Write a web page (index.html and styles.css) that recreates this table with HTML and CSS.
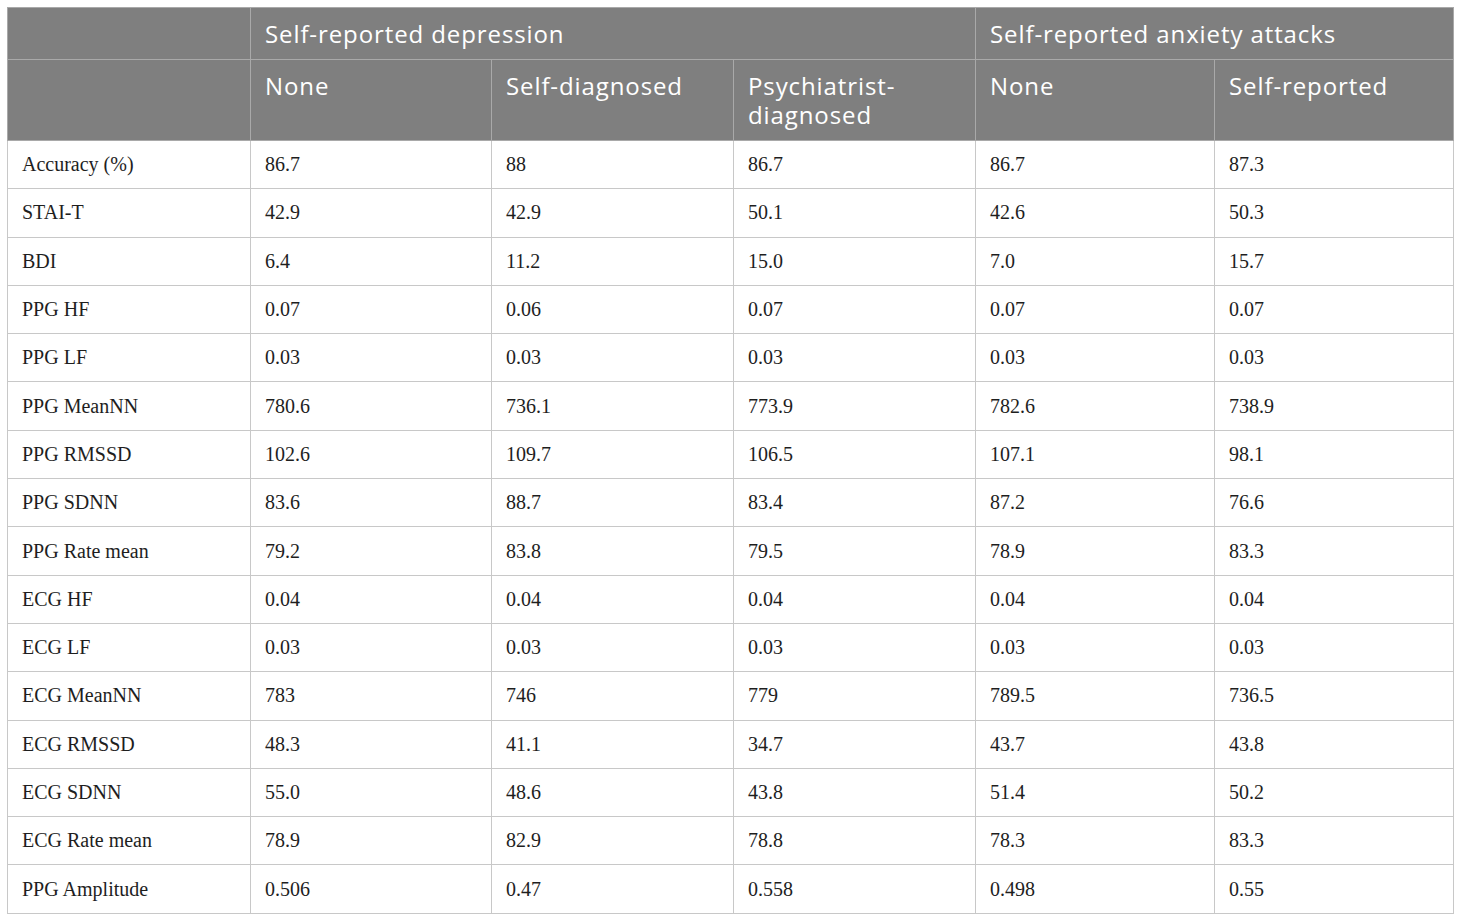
FILE: index.html
```html
<!DOCTYPE html>
<html>
<head>
<meta charset="utf-8">
<link rel="stylesheet" href="styles.css">
</head>
<body>
<div class="wrap">
<table class="data">
<colgroup>
<col class="c1"><col class="c2"><col class="c3"><col class="c4"><col class="c5"><col class="c6">
</colgroup>
<thead>
<tr>
<th></th>
<th colspan="3">Self-reported depression</th>
<th colspan="2">Self-reported anxiety attacks</th>
</tr>
<tr>
<th></th>
<th>None</th>
<th>Self-diagnosed</th>
<th>Psychiatrist-<br>diagnosed</th>
<th>None</th>
<th>Self-reported</th>
</tr>
</thead>
<tbody>
<tr><td>Accuracy (%)</td><td>86.7</td><td>88</td><td>86.7</td><td>86.7</td><td>87.3</td></tr>
<tr><td>STAI-T</td><td>42.9</td><td>42.9</td><td>50.1</td><td>42.6</td><td>50.3</td></tr>
<tr><td>BDI</td><td>6.4</td><td>11.2</td><td>15.0</td><td>7.0</td><td>15.7</td></tr>
<tr><td>PPG HF</td><td>0.07</td><td>0.06</td><td>0.07</td><td>0.07</td><td>0.07</td></tr>
<tr><td>PPG LF</td><td>0.03</td><td>0.03</td><td>0.03</td><td>0.03</td><td>0.03</td></tr>
<tr><td>PPG MeanNN</td><td>780.6</td><td>736.1</td><td>773.9</td><td>782.6</td><td>738.9</td></tr>
<tr><td>PPG RMSSD</td><td>102.6</td><td>109.7</td><td>106.5</td><td>107.1</td><td>98.1</td></tr>
<tr><td>PPG SDNN</td><td>83.6</td><td>88.7</td><td>83.4</td><td>87.2</td><td>76.6</td></tr>
<tr><td>PPG Rate mean</td><td>79.2</td><td>83.8</td><td>79.5</td><td>78.9</td><td>83.3</td></tr>
<tr><td>ECG HF</td><td>0.04</td><td>0.04</td><td>0.04</td><td>0.04</td><td>0.04</td></tr>
<tr><td>ECG LF</td><td>0.03</td><td>0.03</td><td>0.03</td><td>0.03</td><td>0.03</td></tr>
<tr><td>ECG MeanNN</td><td>783</td><td>746</td><td>779</td><td>789.5</td><td>736.5</td></tr>
<tr><td>ECG RMSSD</td><td>48.3</td><td>41.1</td><td>34.7</td><td>43.7</td><td>43.8</td></tr>
<tr><td>ECG SDNN</td><td>55.0</td><td>48.6</td><td>43.8</td><td>51.4</td><td>50.2</td></tr>
<tr><td>ECG Rate mean</td><td>78.9</td><td>82.9</td><td>78.8</td><td>78.3</td><td>83.3</td></tr>
<tr><td>PPG Amplitude</td><td>0.506</td><td>0.47</td><td>0.558</td><td>0.498</td><td>0.55</td></tr>
</tbody>
</table>
</div>
</body>
</html>
```
FILE: styles.css
```css
html, body {
  margin: 0;
  padding: 0;
  background: #ffffff;
}
.wrap {
  padding: 7px 7px 0 7px;
}
.data {
  border-collapse: collapse;
  table-layout: fixed;
  width: 1446px;
}
.c1 { width: 243px; }
.c2 { width: 241px; }
.c3 { width: 242px; }
.c4 { width: 242px; }
.c5 { width: 239px; }
.c6 { width: 239px; }
.data th {
  background: #7f7f7f;
  color: #ffffff;
  font-family: "Open Sans", "Noto Sans", sans-serif;
  font-weight: 400;
  font-size: 24px;
  letter-spacing: 0.9px;
  line-height: 29px;
  text-align: left;
  vertical-align: top;
  padding: 11px 14px 11px 14px;
  border: 1px solid #a9a9a9;
}
.data td {
  font-family: "Liberation Serif", "Times New Roman", serif;
  font-size: 20px;
  color: #1e1e1e;
  height: 48.3px;
  padding: 0 14px;
  vertical-align: middle;
  border: 1px solid #c8c8c8;
  box-sizing: border-box;
}
```
